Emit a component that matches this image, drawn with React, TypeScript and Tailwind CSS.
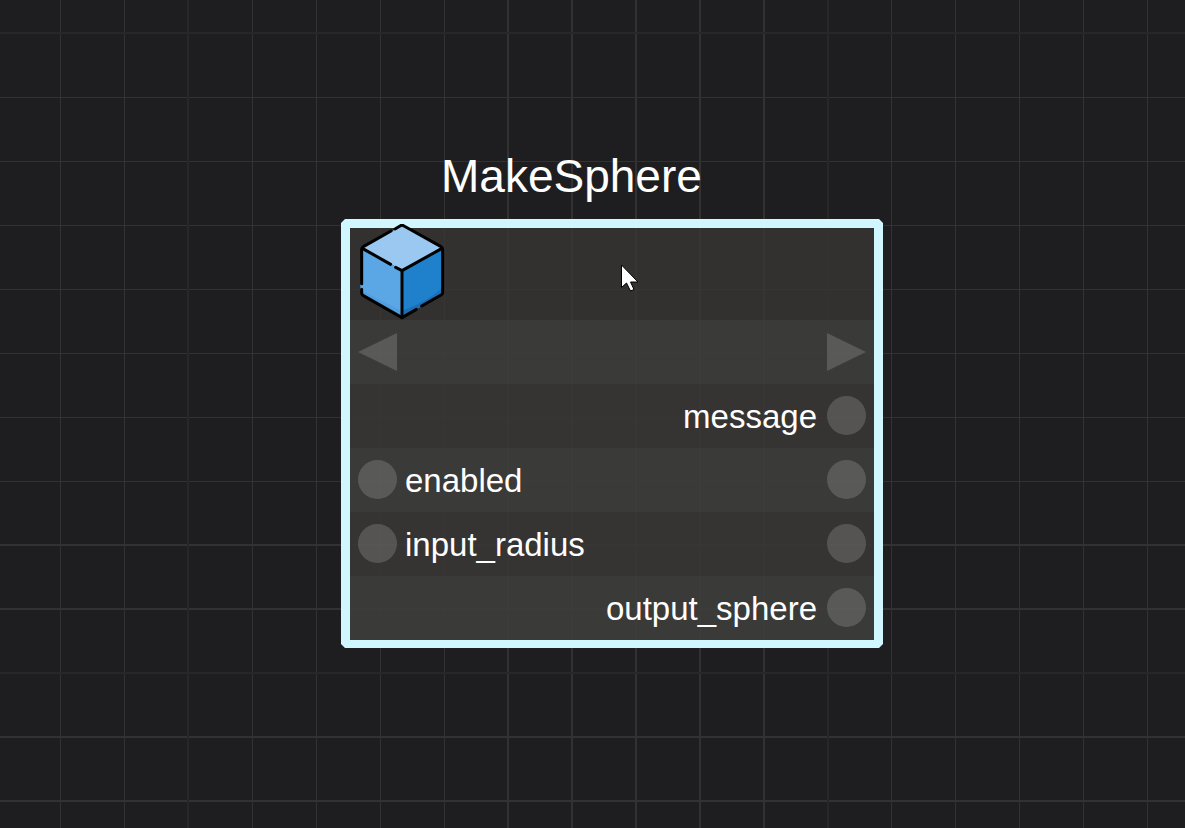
import React from "react";

type Line = { at: number; size: number; color: string };

const SPACING = 64;
const FAINT = "#272727";
const STRONG = "#323232";

const columns: Line[] = Array.from({ length: 40 }, (_, i) => {
  const at = 60 + i * SPACING;
  if (i % 10 === 2) return { at: at - 1, size: 2, color: FAINT };
  if (i >= 7 && i <= 11) return { at: at - 1, size: 2, color: STRONG };
  if (i > 12) return { at: at - 1, size: 1, color: STRONG };
  return { at, size: 1, color: STRONG };
});

const rows: Line[] = Array.from({ length: 30 }, (_, i) => {
  const at = 33 + i * SPACING;
  if (i % 10 === 0) return { at: at - 1, size: 2, color: FAINT };
  if (i >= 8) return { at: at - 1, size: 2, color: STRONG };
  return { at, size: 1, color: STRONG };
});

function Grid() {
  const strong = (l: Line) => l.color === STRONG;
  const faint = (l: Line) => l.color === FAINT;
  const drawRow = (l: Line) => (
    <rect key={`r${l.at}`} x="0" y={l.at} width="100%" height={l.size} fill={l.color} />
  );
  const drawColumn = (l: Line) => (
    <rect key={`c${l.at}`} x={l.at} y="0" width={l.size} height="100%" fill={l.color} />
  );
  return (
    <svg className="absolute inset-0 h-full w-full" aria-hidden="true" shapeRendering="crispEdges">
      {rows.filter(strong).map(drawRow)}
      {columns.filter(strong).map(drawColumn)}
      {rows.filter(faint).map(drawRow)}
      {columns.filter(faint).map(drawColumn)}
    </svg>
  );
}

function CubeIcon() {
  return (
    <svg className="h-24 w-22 shrink-0" viewBox="69 42 264 288" aria-hidden="true">
      <path d="M201 47 323 114 201 181 80 114Z" fill="#9ac8f0" />
      <path d="M80 114 201 181V323L80 252Z" fill="#5ba7e6" />
      <path d="M80 242 201 303V323L80 252Z" fill="#519fe0" />
      <path d="M323 114 201 181V323L323 252Z" fill="#1f80cc" />
      <path d="M323 231Q290 268 201 303V323L323 252Z" fill="#1c6fb5" />
      <path d="M76 222h8v15h-8Z" fill="#5ba7e6" />
      <g fill="none" stroke="#000" strokeWidth="9" strokeLinecap="round" strokeLinejoin="round">
        <path d="M180 57 195 48Q201 44 207 48L318 110Q323 113 323 118V248Q323 252 318 255L260 288" />
        <path d="M244 298 201 323 85 257Q80 254 80 249V238" />
        <path d="M80 221V118Q80 113 85 110L168 63" />
        <path d="M82 115 167 163" />
        <path d="M182 172 201 182 321 115" />
        <path d="M201 182V323" />
      </g>
    </svg>
  );
}

function Arrow({ side }: { side: "left" | "right" }) {
  return (
    <button type="button" aria-label={side === "left" ? "exec in" : "exec out"} className="block">
      <svg className="block size-[39px]" viewBox="0 0 39 39" aria-hidden="true">
        <path
          d={side === "left" ? "M0 20 39 1V39Z" : "M39 20 0 1V39Z"}
          fill="#fff"
          fillOpacity="0.16"
        />
      </svg>
    </button>
  );
}

function Port({ label }: { label: string }) {
  return <button type="button" aria-label={label} className="size-[39px] shrink-0 rounded-full bg-white/16" />;
}

type PortRow = { name: string; input: boolean; labelSide: "left" | "right" };

const ports: PortRow[] = [
  { name: "message", input: false, labelSide: "right" },
  { name: "enabled", input: true, labelSide: "left" },
  { name: "input_radius", input: true, labelSide: "left" },
  { name: "output_sphere", input: false, labelSide: "right" },
];

function PortItem({ row }: { row: PortRow }) {
  return (
    <li className="flex h-16 items-center px-2 pb-px odd:bg-[#393634]/90 even:bg-[#3d3d3b]/90">
      {row.input && <Port label={`${row.name} in`} />}
      <span className={row.labelSide === "right" ? "mr-2.5 ml-auto pt-[3px]" : "mr-auto ml-2 pt-[3px]"}>
        {row.name}
      </span>
      <Port label={`${row.name} out`} />
    </li>
  );
}

function Cursor() {
  return (
    <svg className="absolute top-9 left-[270px] h-[29px] w-5" viewBox="0 0 20 29" aria-hidden="true">
      <path
        d="M1.5 1V23.5L6.5 19 10.5 27 14 25.5 10.5 18H18Z"
        fill="#fff"
        stroke="#000"
        strokeWidth="1"
      />
    </svg>
  );
}

export default function App() {
  return (
    <main className="relative min-h-screen overflow-hidden bg-[#1e1e20] font-['Liberation_Sans',Arial,sans-serif] text-white">
      <Grid />
      <article className="absolute top-[149px] left-[341px] w-[542px]">
        <h1 className="mb-4 pl-25 text-[46px] leading-[54px]">MakeSphere</h1>
        <div className="border-[9px] border-b-8 border-[#d0f7ff] [clip-path:polygon(4px_0,calc(100%-4px)_0,100%_4px,100%_calc(100%-4px),calc(100%-4px)_100%,4px_100%,0_calc(100%-4px),0_4px)]">
          <header className="relative flex h-23 items-end bg-[#373633]/80 px-2">
            <CubeIcon />
            <Cursor />
          </header>
          <div className="flex h-16 items-center justify-between bg-[#3d3d3b]/90 px-2 pb-px">
            <Arrow side="left" />
            <Arrow side="right" />
          </div>
          <ul className="text-[33px] leading-10">
            {ports.map((row) => (
              <PortItem key={row.name} row={row} />
            ))}
          </ul>
        </div>
      </article>
    </main>
  );
}
